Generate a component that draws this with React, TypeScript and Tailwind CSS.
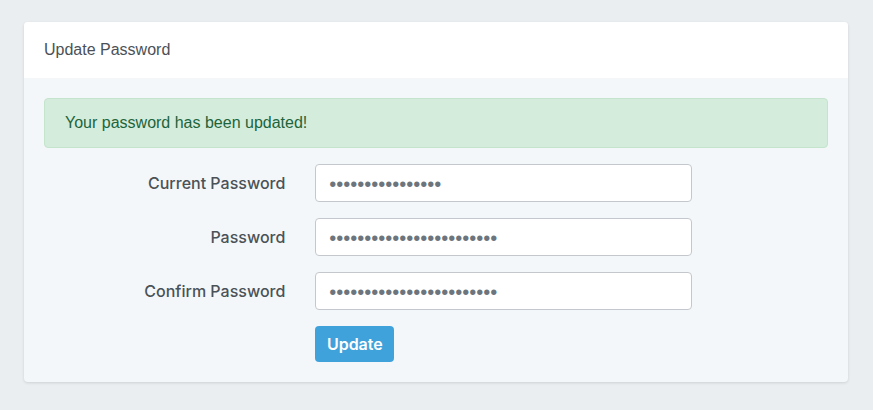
import React from "react";

const font = { fontFamily: '"Liberation Sans", Arial, sans-serif' };
const labelFont = { fontFamily: 'Inter, "Liberation Sans", Arial, sans-serif' };

function Row({ label, value }: { label: string; value: string }) {
  return (
    <div className="flex items-center mb-4 mx-[-15px]">
      <label
        className="w-[271.33px] px-[15px] text-right text-[16px] text-[#4a5258] font-medium"
        style={labelFont}
      >
        {label}
      </label>
      <div className="w-[407px] px-[15px]">
        <input
          type="password"
          defaultValue={value}
          readOnly
          className="block w-full h-[38px] pl-[13px] pr-3 pt-[3px] bg-white border border-[#c4c8cc] rounded-[4px] text-[20px] text-[#6c757d] outline-none"
          style={font}
        />
      </div>
    </div>
  );
}

export default function App() {
  return (
    <div className="min-h-[410px] bg-[#ebeef1] pt-[22px] px-6" style={font}>
      <div className="w-[824px] bg-[#f4f7f9] rounded-[4px] shadow-[0_1px_3px_rgba(0,0,0,0.12)] overflow-hidden">
        <div className="h-14 bg-white flex items-center px-5 text-[16px] text-[#4b5157]">
          Update Password
        </div>
        <div className="p-5">
          <div className="h-[50px] flex items-center px-5 mb-4 bg-[#d4ecdb] border border-[#c4e4cd] rounded-[4px] text-[16px] text-[#1d643b]">
            Your password has been updated!
          </div>
          <Row label="Current Password" value="abcdefghijklmnop" />
          <Row label="Password" value="abcdefghijklmnopqrstuvwx" />
          <Row label="Confirm Password" value="abcdefghijklmnopqrstuvwx" />
          <div className="flex mx-[-15px]">
            <div className="w-[271.33px]" />
            <div className="px-[15px]">
              <button
                className="h-9 w-[79px] bg-[#40a2da] text-white text-[16px] font-semibold rounded-[4px]"
                style={labelFont}
              >
                Update
              </button>
            </div>
          </div>
        </div>
      </div>
    </div>
  );
}
